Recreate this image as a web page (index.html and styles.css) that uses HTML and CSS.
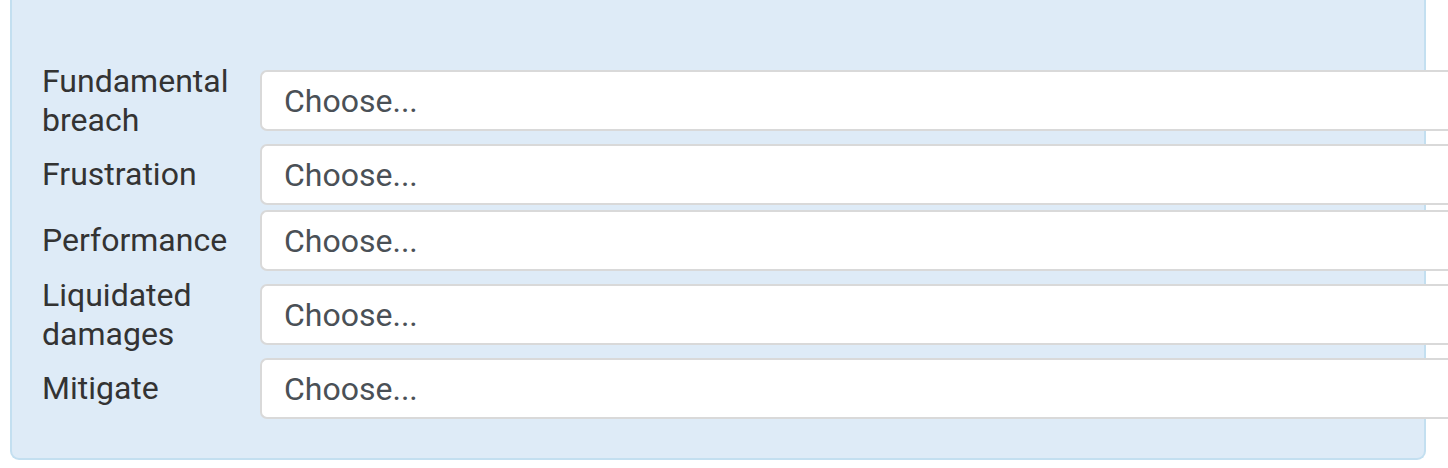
FILE: index.html
```html
<!DOCTYPE html>
<html lang="en">
<head>
<meta charset="utf-8">
<title>Form</title>
<link rel="stylesheet" href="styles.css">
</head>
<body>
<div class="panel">
  <div class="rows">
    <div class="row">
      <label class="label">Fundamental breach</label>
      <div class="select">Choose...</div>
    </div>
    <div class="row">
      <label class="label">Frustration</label>
      <div class="select">Choose...</div>
    </div>
    <div class="row">
      <label class="label">Performance</label>
      <div class="select">Choose...</div>
    </div>
    <div class="row">
      <label class="label">Liquidated damages</label>
      <div class="select">Choose...</div>
    </div>
    <div class="row">
      <label class="label">Mitigate</label>
      <div class="select">Choose...</div>
    </div>
  </div>
</div>
</body>
</html>
```
FILE: styles.css
```css
html, body {
  margin: 0;
  padding: 0;
  overflow: hidden;
  background: #ffffff;
}
body {
  font-family: Roboto, "Liberation Sans", Arial, sans-serif;
  width: 1448px;
  height: 468px;
}
.panel {
  box-sizing: border-box;
  margin-left: 10px;
  width: 1416px;
  background: #deebf7;
  border: 2px solid #c3dff0;
  border-top: 0;
  border-radius: 0 0 9px 9px;
  padding: 62px 0 39px 30px;
}
.rows {
  display: flex;
  flex-direction: column;
  gap: 5px;
}
.row {
  display: flex;
  align-items: center;
}
.label {
  flex: 0 0 218px;
  font-size: 32px;
  line-height: 38.5px;
  color: #333333;
}
.select {
  flex: 0 0 1188px;
  height: 61px;
  box-sizing: border-box;
  background: #ffffff;
  border: 2px solid #d9d9d9;
  border-right: 0;
  border-radius: 7px 0 0 7px;
  padding: 0 22px;
  display: flex;
  align-items: center;
  font-size: 32px;
  color: #4a5056;
}
```
